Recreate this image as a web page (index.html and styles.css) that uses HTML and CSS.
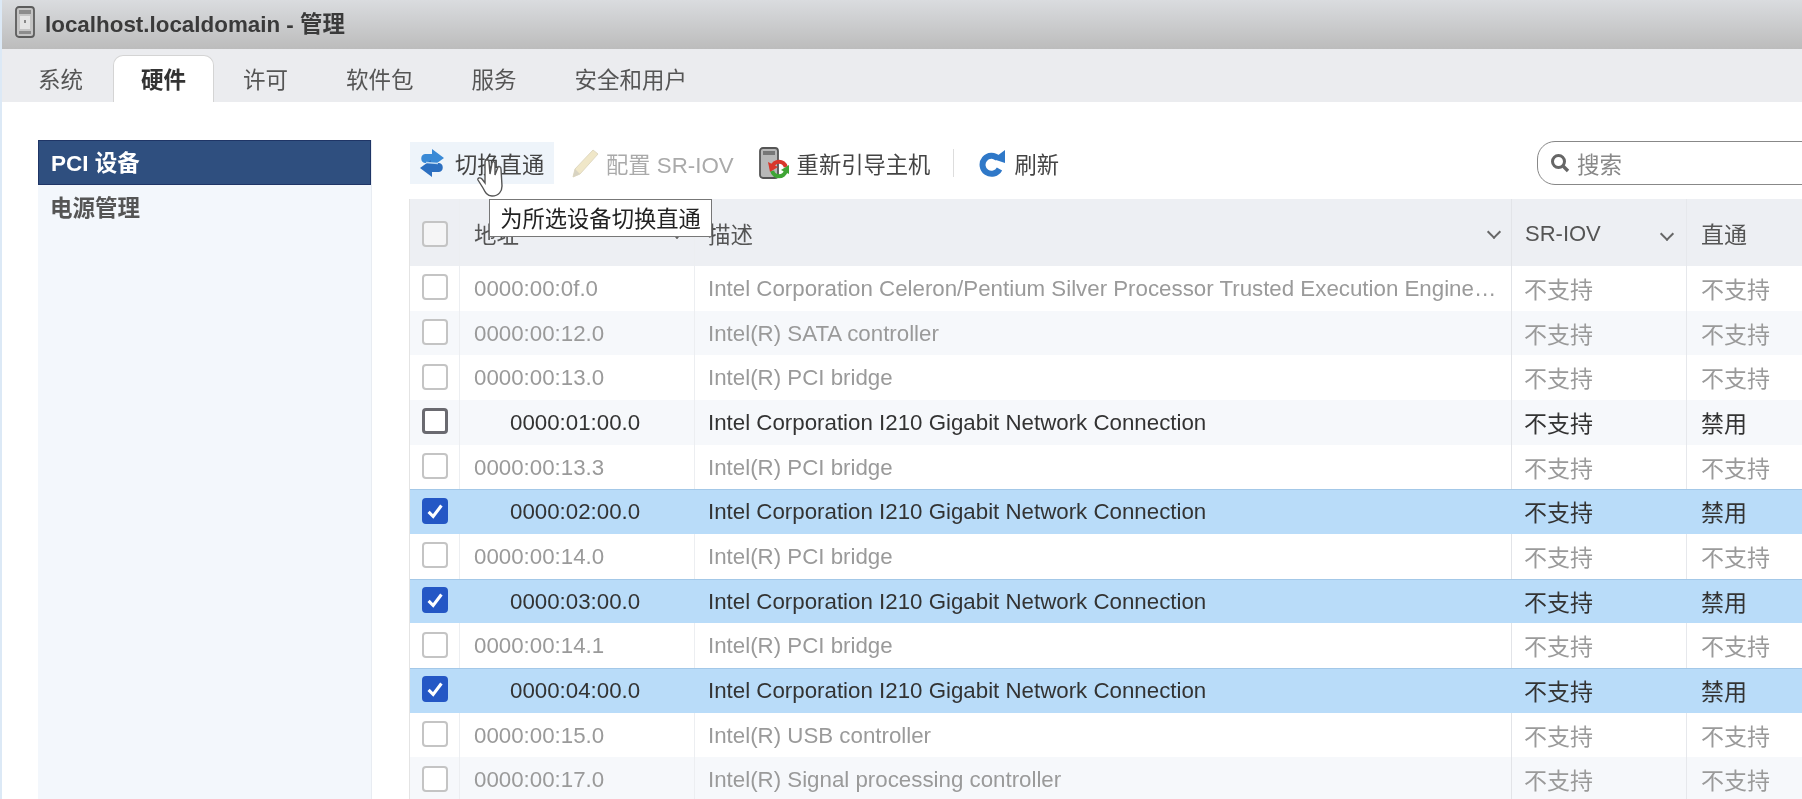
FILE: index.html
```html
<!DOCTYPE html>
<html lang="zh">
<head>
<meta charset="utf-8">
<title>localhost.localdomain - 管理</title>
<link rel="stylesheet" href="styles.css">
</head>
<body>
<div class="page">
  <header class="titlebar">
    <svg class="host-icon" viewBox="0 0 20 32" width="20" height="32"><rect x="1" y="1" width="18" height="30" rx="3" fill="#c4c4c4" stroke="#5c5c5c" stroke-width="1.8"/><rect x="4" y="4" width="12" height="4" fill="#8c8c8c"/><rect x="5" y="10" width="10" height="13" fill="#e4e4e4"/><rect x="9" y="14" width="2" height="3" fill="#888"/><rect x="4" y="25" width="12" height="3" fill="#8c8c8c"/></svg>
    <span class="title-text">localhost.localdomain - 管理</span>
  </header>
  <nav class="tabs">
    <a class="tab">系统</a>
    <a class="tab active">硬件</a>
    <a class="tab">许可</a>
    <a class="tab">软件包</a>
    <a class="tab">服务</a>
    <a class="tab">安全和用户</a>
  </nav>
  <div class="content">
    <aside class="sidebar">
      <div class="side-item selected">PCI 设备</div>
      <div class="side-item">电源管理</div>
    </aside>
    <main class="main">
      <div class="toolbar">
        <button class="tool hover">
          <svg viewBox="0 0 26 30" width="26" height="30"><path d="M13 1 L25 10 L14 18 L14 15 L6 15 C1 15 1 6 6 6 L13 6Z" fill="#3a8ad6"/><path d="M13 29 L1 20 L12 12 L12 15 L20 15 C25 15 25 24 20 24 L13 24Z" fill="#2c6fc0"/><path d="M7 14.5 L19 15.5" stroke="#bcd8f2" stroke-width="1.6"/></svg>
          <span>切换直通</span>
        </button>
        <button class="tool disabled">
          <svg viewBox="0 0 28 30" width="28" height="30"><path d="M22 2 L27 6 L9 26 L2 29 L4 21Z" fill="#f0e7c8" stroke="#e0d9c2"/><path d="M4 21 L9 26 L2 29Z" fill="#d8d3c2"/></svg>
          <span>配置 SR-IOV</span>
        </button>
        <button class="tool reboot">
          <svg viewBox="0 0 30 32" width="30" height="32"><rect x="1" y="1" width="18" height="30" rx="3" fill="#b8b8b8" stroke="#555" stroke-width="1.8"/><rect x="4" y="4" width="12" height="4" fill="#777"/><path d="M13.2 20 A7 7 0 0 1 26.8 20" fill="none" stroke="#d8372b" stroke-width="4"/><path d="M9 15 L19 20 L11 25Z" fill="#d8372b"/><path d="M26.8 24 A7 7 0 0 1 13.2 24" fill="none" stroke="#3fa535" stroke-width="4"/><path d="M30 18 L22 23 L30 27Z" fill="#3fa535"/></svg>
          <span>重新引导主机</span>
        </button>
        <span class="tool-sep"></span>
        <button class="tool refresh">
          <svg viewBox="0 0 28 28" width="28" height="28"><path d="M20 9.5 A9 9 0 1 0 21.5 20" fill="none" stroke="#2f78c8" stroke-width="6"/><path d="M15 10 L27 1 L27 14Z" fill="#2f78c8"/></svg>
          <span>刷新</span>
        </button>
        <div class="search">
          <svg viewBox="0 0 20 20" width="20" height="20"><circle cx="8.5" cy="8.5" r="6" fill="none" stroke="#666" stroke-width="3"/><path d="M13 13 L18 18" stroke="#666" stroke-width="3.4"/></svg>
          <span>搜索</span>
        </div>
      </div>
      <div class="grid">
        <div class="row head">
          <div class="c c-check"><span class="box soft"></span></div>
          <div class="c c-addr"><span>地址</span><i class="chev"></i></div>
          <div class="c c-desc"><span>描述</span><i class="chev"></i></div>
          <div class="c c-sr"><span class="latin">SR-IOV</span><i class="chev"></i></div>
          <div class="c c-pt"><span>直通</span></div>
        </div>
        <div class="row off"><div class="c c-check"><span class="box"></span></div><div class="c c-addr">0000:00:0f.0</div><div class="c c-desc"><span class="clip">Intel Corporation Celeron/Pentium Silver Processor Trusted Execution Engine Interface</span></div><div class="c c-sr">不支持</div><div class="c c-pt">不支持</div></div>
        <div class="row off alt"><div class="c c-check"><span class="box"></span></div><div class="c c-addr">0000:00:12.0</div><div class="c c-desc">Intel(R) SATA controller</div><div class="c c-sr">不支持</div><div class="c c-pt">不支持</div></div>
        <div class="row off"><div class="c c-check"><span class="box"></span></div><div class="c c-addr">0000:00:13.0</div><div class="c c-desc">Intel(R) PCI bridge</div><div class="c c-sr">不支持</div><div class="c c-pt">不支持</div></div>
        <div class="row on alt"><div class="c c-check"><span class="box dark"></span></div><div class="c c-addr nest">0000:01:00.0</div><div class="c c-desc">Intel Corporation I210 Gigabit Network Connection</div><div class="c c-sr">不支持</div><div class="c c-pt">禁用</div></div>
        <div class="row off"><div class="c c-check"><span class="box"></span></div><div class="c c-addr">0000:00:13.3</div><div class="c c-desc">Intel(R) PCI bridge</div><div class="c c-sr">不支持</div><div class="c c-pt">不支持</div></div>
        <div class="row on sel"><div class="c c-check"><span class="box checked"><svg viewBox="0 0 24 24" width="22" height="22"><path d="M5 13 L10 18 L19 6" fill="none" stroke="#fff" stroke-width="3.4"/></svg></span></div><div class="c c-addr nest">0000:02:00.0</div><div class="c c-desc">Intel Corporation I210 Gigabit Network Connection</div><div class="c c-sr">不支持</div><div class="c c-pt">禁用</div></div>
        <div class="row off"><div class="c c-check"><span class="box"></span></div><div class="c c-addr">0000:00:14.0</div><div class="c c-desc">Intel(R) PCI bridge</div><div class="c c-sr">不支持</div><div class="c c-pt">不支持</div></div>
        <div class="row on sel"><div class="c c-check"><span class="box checked"><svg viewBox="0 0 24 24" width="22" height="22"><path d="M5 13 L10 18 L19 6" fill="none" stroke="#fff" stroke-width="3.4"/></svg></span></div><div class="c c-addr nest">0000:03:00.0</div><div class="c c-desc">Intel Corporation I210 Gigabit Network Connection</div><div class="c c-sr">不支持</div><div class="c c-pt">禁用</div></div>
        <div class="row off"><div class="c c-check"><span class="box"></span></div><div class="c c-addr">0000:00:14.1</div><div class="c c-desc">Intel(R) PCI bridge</div><div class="c c-sr">不支持</div><div class="c c-pt">不支持</div></div>
        <div class="row on sel"><div class="c c-check"><span class="box checked"><svg viewBox="0 0 24 24" width="22" height="22"><path d="M5 13 L10 18 L19 6" fill="none" stroke="#fff" stroke-width="3.4"/></svg></span></div><div class="c c-addr nest">0000:04:00.0</div><div class="c c-desc">Intel Corporation I210 Gigabit Network Connection</div><div class="c c-sr">不支持</div><div class="c c-pt">禁用</div></div>
        <div class="row off"><div class="c c-check"><span class="box"></span></div><div class="c c-addr">0000:00:15.0</div><div class="c c-desc">Intel(R) USB controller</div><div class="c c-sr">不支持</div><div class="c c-pt">不支持</div></div>
        <div class="row off alt"><div class="c c-check"><span class="box"></span></div><div class="c c-addr">0000:00:17.0</div><div class="c c-desc">Intel(R) Signal processing controller</div><div class="c c-sr">不支持</div><div class="c c-pt">不支持</div></div>
      </div>
    </main>
  </div>
  <svg class="cursor" viewBox="0 0 30 42" width="30" height="42"><path d="M8 4 C8 1 12 1 12 4 L13 16 L15 5 C16 3 18 3 18 6 L18 17 L21 9 C22 8 24 9 24 11 L25 28 C25 33 22 38 15 38 C10 38 8 34 6 30 L1 22 C0 20 3 19 5 21 L8 25Z" fill="#fff" stroke="#555" stroke-width="1.4"/></svg>
  <div class="tooltip">为所选设备切换直通</div>
</div>
</body>
</html>
```

FILE: styles.css
```css
* { box-sizing: border-box; }
html, body { margin: 0; padding: 0; height: 100%; overflow: hidden; background: #fff; }
body { font-family: "Liberation Sans", "Noto Sans CJK SC", sans-serif; font-size: 22.3px; color: #333; }

.page { position: relative; width: 1802px; height: 799px; overflow: hidden; background: #fff; filter: blur(0.6px); }
.page::after { content: ""; position: absolute; left: 0; top: 0; bottom: 0; width: 2px; background: #dce9f6; }

.titlebar { height: 49px; display: flex; align-items: center; gap: 10px; padding: 0 0 5px 15px; background: linear-gradient(#dadcdf, #bcbcbc); }
.title-text { font-size: 22.4px; font-weight: 700; color: #3a3a3a; }
.host-icon { flex: none; }

.tabs { height: 53px; display: flex; align-items: flex-end; padding-left: 9px; background: #ebecef; }
.tab { height: 46px; display: flex; align-items: center; padding: 0 29px 3px; font-size: 22.5px; color: #555; }
.tab.active { height: 47px; padding: 0 27px 3px; margin-left: 1px; background: #fff; border: 1px solid #d4d4d4; border-bottom: 0; border-radius: 10px 10px 0 0; font-weight: 700; color: #333; }

.content { display: flex; padding: 38px 0 0 38px; gap: 38px; }
.sidebar { flex: none; width: 334px; height: 700px; background: #f3f7fc; border-right: 1px solid #e8ecf2; }
.side-item { height: 45px; padding: 0 0 3px 12px; display: flex; align-items: center; font-size: 22.5px; font-weight: 700; color: #555; }
.side-item.selected { background: #2f4f7f; border: 1px solid #1f3566; color: #fff; }

.main { flex: 1; min-width: 0; }
.toolbar { height: 59px; display: flex; align-items: flex-start; position: relative; padding-top: 2px; }
.tool { height: 42px; display: flex; align-items: center; gap: 7px; padding: 0 8px; border: 0; background: none; font: inherit; font-size: 22.3px; color: #444; }
.tool svg { flex: none; }
.tool.hover { background: #eef4fa; width: 144px; padding: 0 8px 0 9px; gap: 10px; }
.tool.disabled { color: #aaa; margin-left: 9px; }
.tool.reboot { margin-left: 8px; padding: 0 9px; gap: 8px; }
.tool.refresh { padding: 0 9px; gap: 8px; }
.tool-sep { width: 1px; height: 28px; margin: 7px 15px 0 14px; background: #ddd; }
.search { position: absolute; left: 1127px; top: 1px; width: 300px; height: 44px; border: 1px solid #888; border-radius: 18px; display: flex; align-items: center; gap: 7px; padding-left: 12px; font-size: 22.5px; color: #888; }

.grid { width: 1392px; box-shadow: -1px 0 0 #e4e4e4; }
.row { display: flex; height: 44.68px; align-items: center; }
.row.head { height: 67px; background: #edeff3; color: #555; font-size: 22.5px; }
.row.alt { background: #f6f8fb; }
.row.sel { background: #b9dcf9; box-shadow: inset 0 1px 0 #a3c8e8; }
.row.off { color: #9a9a9a; }
.row.on { color: #333; }
.c { height: 100%; display: flex; align-items: center; position: relative; border-right: 1px solid #eceef1; flex: none; padding-top: 1px; }
.row.sel .c { border-right-color: transparent; }
.c-check { width: 50px; justify-content: center; padding: 0 0 2px 1px; }
.c-addr { width: 235px; padding-left: 14px; }
.c-addr.nest { padding-left: 50px; }
.c-desc { width: 817px; padding-left: 13px; }
.c-sr { width: 175px; padding: 0 0 1px 12px; font-size: 23px; border-right-color: #e6e8ec; }
.c-pt { flex: 1; padding: 0 0 1px 14px; font-size: 23px; border-right: 0; }
.head .c-check { padding: 3px 0 0 1px; }
.head .c-sr { padding: 3px 0 0 13px; }
.head .c-pt { padding: 1px 0 0 14px; }
.head .c-desc { border-right: 1px solid #c9ccd2; }
.row .c-desc { border-right-color: #e2e4e8; }
.latin { font-size: 22px; }
.clip { white-space: nowrap; overflow: hidden; text-overflow: ellipsis; display: block; width: 789px; }
.chev { position: absolute; right: 12px; top: 28px; width: 10px; height: 10px; border-right: 2px solid #666; border-bottom: 2px solid #666; transform: rotate(45deg); }
.c-sr .chev { top: 30px; right: 14px; }
.box { width: 26px; height: 26px; border: 2.5px solid #c4c4c4; border-radius: 4px; background: #fff; display: flex; align-items: center; justify-content: center; }
.box.soft { background: #f5f5f6; }
.box.dark { border: 3px solid #6a6a70; }
.box.checked { background: #2457c5; border-color: #2457c5; }

.cursor { position: absolute; left: 477px; top: 158px; }
.tooltip { position: absolute; left: 489px; top: 199px; width: 223px; height: 38px; padding-bottom: 3px; background: #fff; border: 1px solid #777; display: flex; align-items: center; justify-content: center; font-size: 22.3px; color: #222; }
```
